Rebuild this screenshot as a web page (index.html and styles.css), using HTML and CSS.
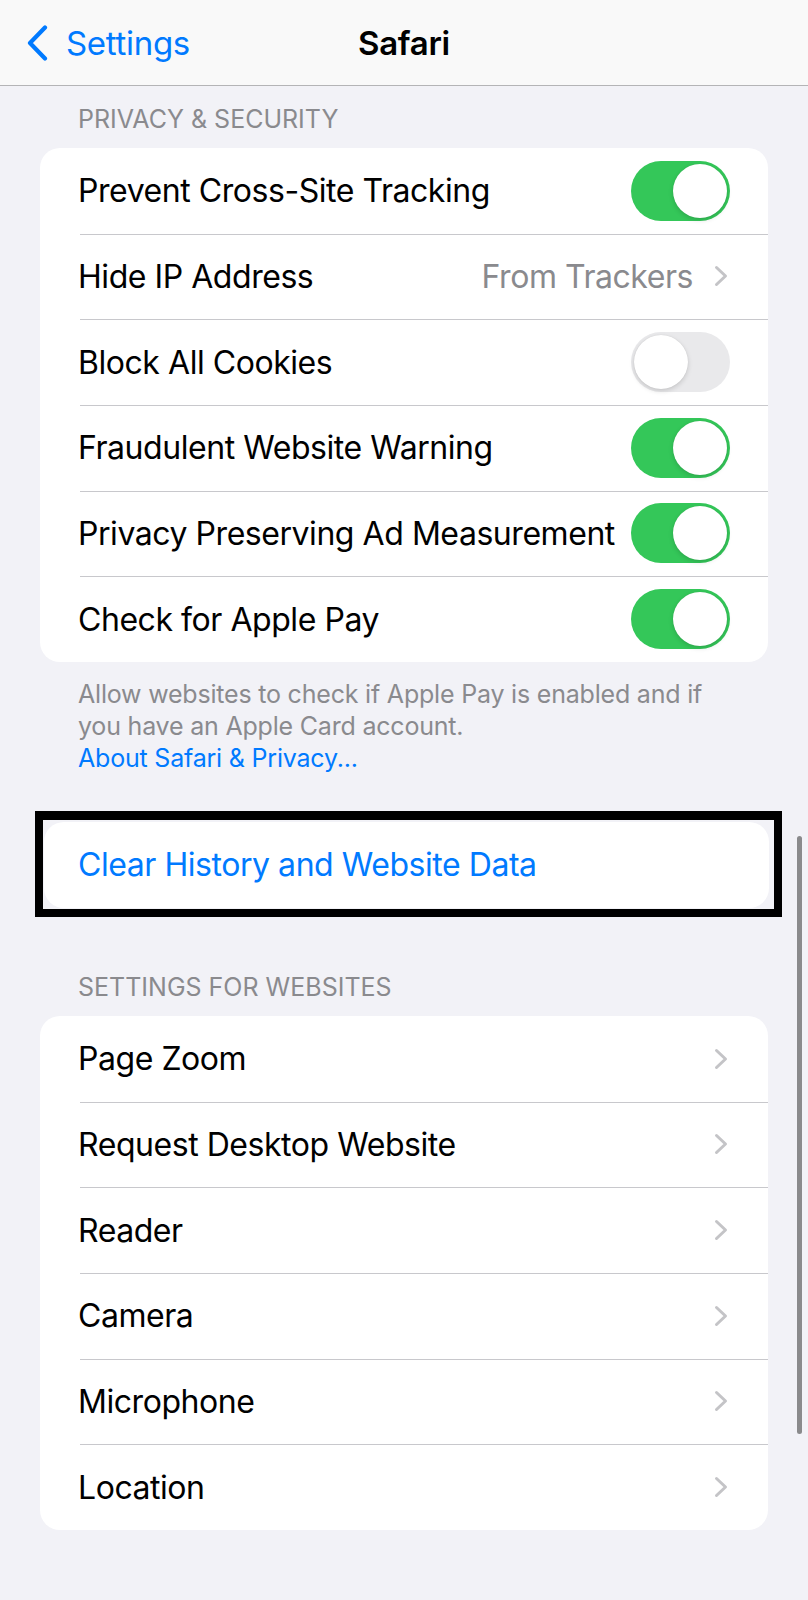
FILE: index.html
```html
<!DOCTYPE html>
<html>
<head>
<meta charset="utf-8">
<link rel="stylesheet" href="styles.css">
</head>
<body>
<div class="screen">
  <header class="nav">
    <div class="back">
      <svg class="back-icon" width="22" height="36" viewBox="0 0 22 36"><path d="M19 2.5 L4 18 L19 33.5" fill="none" stroke="#007aff" stroke-width="4.2" stroke-linecap="round" stroke-linejoin="round"/></svg>
      <span class="back-label">Settings</span>
    </div>
    <div class="title">Safari</div>
  </header>

  <div class="section-header first">PRIVACY &amp; SECURITY</div>
  <div class="card">
    <div class="row"><span class="label">Prevent Cross-Site Tracking</span><span class="toggle on"><span class="knob"></span></span></div>
    <div class="row"><span class="label">Hide IP Address</span><span class="value">From Trackers</span><svg class="chev" width="14" height="22" viewBox="0 0 14 22"><path d="M2.5 2.5 L11.5 11 L2.5 19.5" fill="none" stroke="#c4c4c7" stroke-width="3" stroke-linecap="round" stroke-linejoin="round"/></svg></div>
    <div class="row"><span class="label">Block All Cookies</span><span class="toggle off"><span class="knob"></span></span></div>
    <div class="row"><span class="label">Fraudulent Website Warning</span><span class="toggle on"><span class="knob"></span></span></div>
    <div class="row"><span class="label">Privacy Preserving Ad Measurement</span><span class="toggle on"><span class="knob"></span></span></div>
    <div class="row"><span class="label">Check for Apple Pay</span><span class="toggle on"><span class="knob"></span></span></div>
  </div>
  <div class="footer">Allow websites to check if Apple Pay is enabled and if you have an Apple Card account.<br><span class="link">About Safari &amp; Privacy...</span></div>

  <div class="highlight">
    <div class="card single">
      <div class="row"><span class="label blue">Clear History and Website Data</span></div>
    </div>
  </div>

  <div class="section-header">SETTINGS FOR WEBSITES</div>
  <div class="card">
    <div class="row"><span class="label">Page Zoom</span><svg class="chev" width="14" height="22" viewBox="0 0 14 22"><path d="M2.5 2.5 L11.5 11 L2.5 19.5" fill="none" stroke="#c4c4c7" stroke-width="3" stroke-linecap="round" stroke-linejoin="round"/></svg></div>
    <div class="row"><span class="label">Request Desktop Website</span><svg class="chev" width="14" height="22" viewBox="0 0 14 22"><path d="M2.5 2.5 L11.5 11 L2.5 19.5" fill="none" stroke="#c4c4c7" stroke-width="3" stroke-linecap="round" stroke-linejoin="round"/></svg></div>
    <div class="row"><span class="label">Reader</span><svg class="chev" width="14" height="22" viewBox="0 0 14 22"><path d="M2.5 2.5 L11.5 11 L2.5 19.5" fill="none" stroke="#c4c4c7" stroke-width="3" stroke-linecap="round" stroke-linejoin="round"/></svg></div>
    <div class="row"><span class="label">Camera</span><svg class="chev" width="14" height="22" viewBox="0 0 14 22"><path d="M2.5 2.5 L11.5 11 L2.5 19.5" fill="none" stroke="#c4c4c7" stroke-width="3" stroke-linecap="round" stroke-linejoin="round"/></svg></div>
    <div class="row"><span class="label">Microphone</span><svg class="chev" width="14" height="22" viewBox="0 0 14 22"><path d="M2.5 2.5 L11.5 11 L2.5 19.5" fill="none" stroke="#c4c4c7" stroke-width="3" stroke-linecap="round" stroke-linejoin="round"/></svg></div>
    <div class="row"><span class="label">Location</span><svg class="chev" width="14" height="22" viewBox="0 0 14 22"><path d="M2.5 2.5 L11.5 11 L2.5 19.5" fill="none" stroke="#c4c4c7" stroke-width="3" stroke-linecap="round" stroke-linejoin="round"/></svg></div>
  </div>

  <div class="scrollbar"></div>
</div>
</body>
</html>
```

FILE: styles.css
```css
* { box-sizing: border-box; }
html, body { margin: 0; padding: 0; }
body {
  background: #f2f2f7;
  font-family: Inter, "Noto Sans", "Liberation Sans", sans-serif;
  color: #000;
}
.screen {
  position: relative;
  width: 808px;
  height: 1600px;
  background: #f2f2f7;
  overflow: hidden;
}
.nav {
  position: relative;
  height: 86px;
  background: #f9f9f9;
  border-bottom: 1px solid #b4b4b6;
  display: flex;
  align-items: center;
  justify-content: center;
}
.back {
  position: absolute;
  left: 26px;
  top: 25px;
  display: flex;
  align-items: center;
  gap: 18px;
}
.back-label {
  color: #007aff;
  font-size: 33px;
  letter-spacing: -0.3px;
  line-height: 36px;
}
.title {
  font-size: 33px;
  font-weight: 600;
  letter-spacing: -0.3px;
  line-height: 36px;
}
.section-header {
  margin: 53px 78px 12px;
  font-size: 25px;
  line-height: 34px;
  color: #8a8a8e;
  letter-spacing: 0;
}
.section-header.first { margin-top: 16px; }
.card {
  margin: 0 40px;
  background: #fff;
  border-radius: 20px;
  overflow: hidden;
}
.row {
  position: relative;
  height: 85.67px;
  display: flex;
  align-items: center;
  padding: 0 38px 0 38px;
}
.row + .row::before {
  content: "";
  position: absolute;
  left: 40px;
  right: 0;
  top: 0;
  height: 1px;
  background: #c8c8cc;
}
.label {
  flex: 1;
  min-width: 0;
  font-size: 32px;
  letter-spacing: -0.45px;
  white-space: nowrap;
}
.label.blue { color: #007aff; }
.value {
  font-size: 32px;
  letter-spacing: -0.45px;
  color: #8a8a8e;
  margin-right: 21px;
}
.chev { flex: none; margin-right: 2px; }
.toggle {
  flex: none;
  position: relative;
  width: 99px;
  height: 60px;
  border-radius: 30px;
  display: flex;
  align-items: center;
  padding: 3px;
}
.toggle.on { background: #34c759; justify-content: flex-end; }
.toggle.off { background: #e9e9eb; justify-content: flex-start; }
.knob {
  width: 54px;
  height: 54px;
  border-radius: 50%;
  background: #fff;
  box-shadow: 0 2px 5px rgba(0,0,0,0.15), 0 0 1px rgba(0,0,0,0.12);
}
.footer {
  padding: 16px 60px 0 78px;
  font-size: 25px;
  letter-spacing: -0.2px;
  line-height: 32px;
  color: #8a8a8e;
}
.link { color: #007aff; }
.highlight {
  margin: 37px 26px 0 35px;
  border: 8px solid #000;
  border-top-width: 9px;
  padding: 2px 5px 1px 1px;
}
.highlight .card {
  margin: 0;
  border-radius: 20px;
}
.highlight .row { height: 86px; padding-left: 34px; }
.scrollbar {
  position: absolute;
  left: 797px;
  top: 836px;
  width: 5px;
  height: 598px;
  border-radius: 3px;
  background: #8a8a8c;
}
```
